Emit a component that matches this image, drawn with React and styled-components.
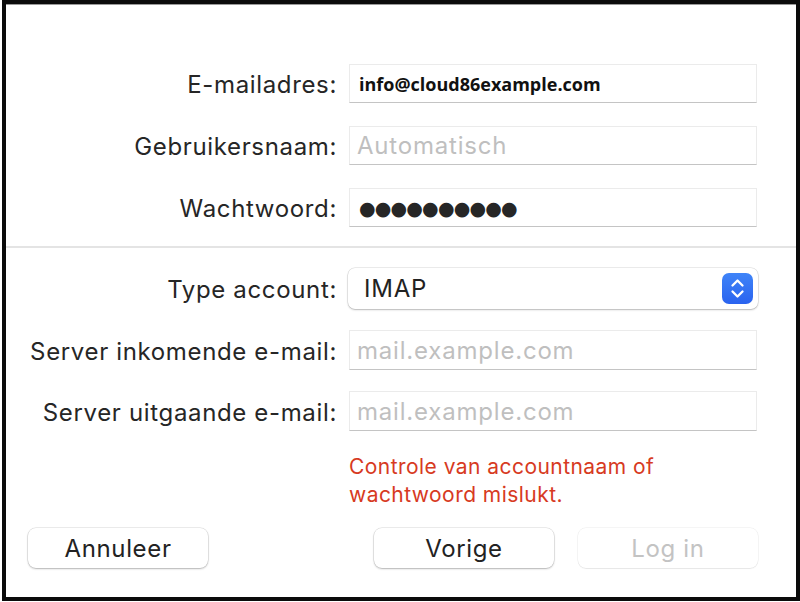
import styled, { createGlobalStyle } from "styled-components";

const GlobalStyle = createGlobalStyle`
  html, body {
    margin: 0;
    padding: 0;
    background: #ffffff;
  }
  body {
    font-family: Inter, "Liberation Sans", sans-serif;
    color: #262626;
  }
`;

const Frame = styled.div`
  box-sizing: border-box;
  width: 798px;
  height: 601px;
  margin-left: 2px;
  border: 4px solid #0b0b0b;
  background: #ffffff;
  box-shadow: inset 0 1px 0 #9a9a9a;
  display: flex;
  flex-direction: column;
`;

const Section = styled.div`
  display: flex;
  flex-direction: column;
  gap: ${(p) => p.gap}px;
  padding-top: ${(p) => p.top}px;
`;

const Row = styled.div`
  display: flex;
  align-items: center;
  height: ${(p) => p.h}px;
`;

const Label = styled.label`
  width: 331px;
  margin-right: 12px;
  padding-top: 2px;
  text-align: right;
  font-size: 24px;
  letter-spacing: 0.65px;
  color: #262626;
  white-space: nowrap;
`;

const Field = styled.div`
  box-sizing: border-box;
  width: 408px;
  height: 100%;
  display: flex;
  align-items: center;
  padding-left: 7px;
  background: #ffffff;
  border: 1px solid #ebebeb;
  border-bottom: 1px solid #c4c4c4;
  font-size: 24px;
  letter-spacing: 0.8px;
  color: #bfbfbf;
`;

const Value = styled.span`
  font-family: "Open Sans", sans-serif;
  font-weight: 700;
  font-size: 18px;
  letter-spacing: 0;
  color: #111111;
  padding-left: 2px;
`;

const Dots = styled.span`
  font-family: "DejaVu Sans", sans-serif;
  font-size: 19px;
  letter-spacing: -0.8px;
  color: #262626;
  padding-left: 2px;
`;

const Divider = styled.div`
  height: 2px;
  background: #e4e4e4;
  margin-top: 19px;
`;

const Select = styled.div`
  box-sizing: border-box;
  width: 410px;
  height: 41px;
  margin-left: -1px;
  display: flex;
  align-items: center;
  justify-content: space-between;
  padding: 0 5px 0 16px;
  border-radius: 7px;
  background: #ffffff;
  box-shadow: 0 0 0 0.5px rgba(0, 0, 0, 0.14), 0 1px 2px rgba(0, 0, 0, 0.22);
  font-size: 24px;
  letter-spacing: 0.75px;
  color: #222222;
`;

const Stepper = styled.div`
  width: 31px;
  height: 31px;
  border-radius: 7px;
  background: linear-gradient(#3f84f8, #2a63ef);
  display: flex;
  align-items: center;
  justify-content: center;
`;

const ErrorText = styled.p`
  margin: 22px 0 0 343px;
  font-size: 21px;
  letter-spacing: 0.45px;
  line-height: 28px;
  color: #d73a22;
  width: 340px;
`;

const Footer = styled.div`
  display: flex;
  align-items: center;
  margin-top: 19px;
  padding: 0 37px 0 22px;
`;

const Button = styled.button`
  box-sizing: border-box;
  width: 180px;
  height: 40px;
  border: none;
  border-radius: 8px;
  background: #ffffff;
  font-family: Inter, "Liberation Sans", sans-serif;
  font-size: 24px;
  letter-spacing: 0.65px;
  color: ${(p) => (p.disabled ? "#c3c3c3" : "#222222")};
  box-shadow: ${(p) =>
    p.disabled
      ? "0 0 0 0.5px rgba(0,0,0,0.08), 0 1px 1px rgba(0,0,0,0.06)"
      : "0 0 0 0.5px rgba(0,0,0,0.14), 0 1px 2px rgba(0,0,0,0.24)"};
  margin-left: ${(p) => p.ml || 0}px;
  padding: 0;
`;

const StepperIcon = () => (
  <svg width="31" height="31" viewBox="0 0 31 31">
    <path
      d="M10.5 12.5 L15.5 7.5 L20.5 12.5 M10.5 18.5 L15.5 23.5 L20.5 18.5"
      fill="none"
      stroke="#ffffff"
      strokeWidth="2.3"
      strokeLinecap="round"
      strokeLinejoin="round"
    />
  </svg>
);

export default function App() {
  return (
    <>
      <GlobalStyle />
      <Frame>
        <Section top={60} gap={23}>
          <Row h={39}>
            <Label>E-mailadres:</Label>
            <Field>
              <Value>info@cloud86example.com</Value>
            </Field>
          </Row>
          <Row h={39}>
            <Label>Gebruikersnaam:</Label>
            <Field>Automatisch</Field>
          </Row>
          <Row h={39}>
            <Label>Wachtwoord:</Label>
            <Field>
              <Dots>●●●●●●●●●●</Dots>
            </Field>
          </Row>
        </Section>
        <Divider />
        <Section top={20} gap={21}>
          <Row h={41}>
            <Label>Type account:</Label>
            <Select>
              IMAP
              <Stepper>
                <StepperIcon />
              </Stepper>
            </Select>
          </Row>
          <Row h={40}>
            <Label>Server inkomende e-mail:</Label>
            <Field>mail.example.com</Field>
          </Row>
          <Row h={40}>
            <Label>Server uitgaande e-mail:</Label>
            <Field>mail.example.com</Field>
          </Row>
        </Section>
        <ErrorText>Controle van accountnaam of wachtwoord mislukt.</ErrorText>
        <Footer>
          <Button>Annuleer</Button>
          <Button ml={166}>Vorige</Button>
          <Button ml={24} disabled>
            Log in
          </Button>
        </Footer>
      </Frame>
    </>
  );
}
